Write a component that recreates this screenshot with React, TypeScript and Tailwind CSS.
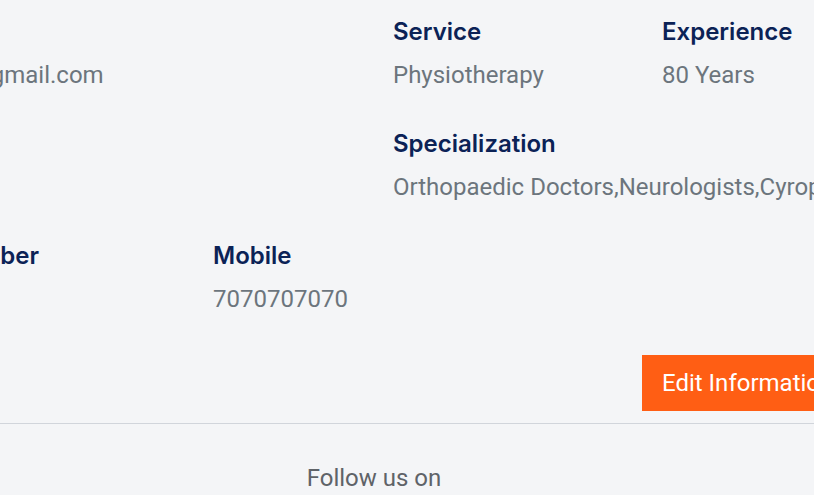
import React from "react";

const label = "text-[24px] leading-[32px] font-semibold text-[#0b2256] whitespace-nowrap [font-family:Inter,'Noto_Sans',sans-serif]";
const value = "mt-[11px] h-[32px] text-[24px] leading-[32px] text-[#6c757d] whitespace-nowrap [font-family:Roboto,'Liberation_Sans',sans-serif]";

function Field({ title, text, className = "" }: { title: string; text: string; className?: string }) {
  return (
    <div className={className}>
      <div className={label}>{title}</div>
      <div className={value}>{text}</div>
    </div>
  );
}

export default function App() {
  return (
    <div className="w-[814px] h-[495px] overflow-hidden bg-[#f4f5f7] [font-family:Roboto,'Liberation_Sans',sans-serif]">
      <div className="ml-[-226px] w-[1200px] pt-[16px]">
        <div className="flex">
          <Field title="Email" text="doctor@gmail.com" className="ml-[126px] w-[493px]" />
          <Field title="Service" text="Physiotherapy" className="w-[269px]" />
          <Field title="Experience" text="80 Years" />
        </div>
        <div className="flex mt-[37px]">
          <Field
            title="Specialization"
            text="Orthopaedic Doctors,Neurologists,Cyropractors"
            className="ml-[619px]"
          />
        </div>
        <div className="flex mt-[37px]">
          <Field title="Phone Number" text="" className="ml-[92px] w-[347px]" />
          <Field title="Mobile" text="7070707070" />
        </div>
        <div className="flex mt-[40px]">
          <button className="ml-[868px] bg-[#ff5e14] text-white px-5 py-3 text-[24px] leading-[32px] whitespace-nowrap">
            Edit Information
          </button>
        </div>
        <div className="mt-3 border-t border-[#d1d5db]" />
        <div className="pt-[38px] text-center text-[24px] leading-[32px] text-[#5f6368]">Follow us on</div>
      </div>
    </div>
  );
}
